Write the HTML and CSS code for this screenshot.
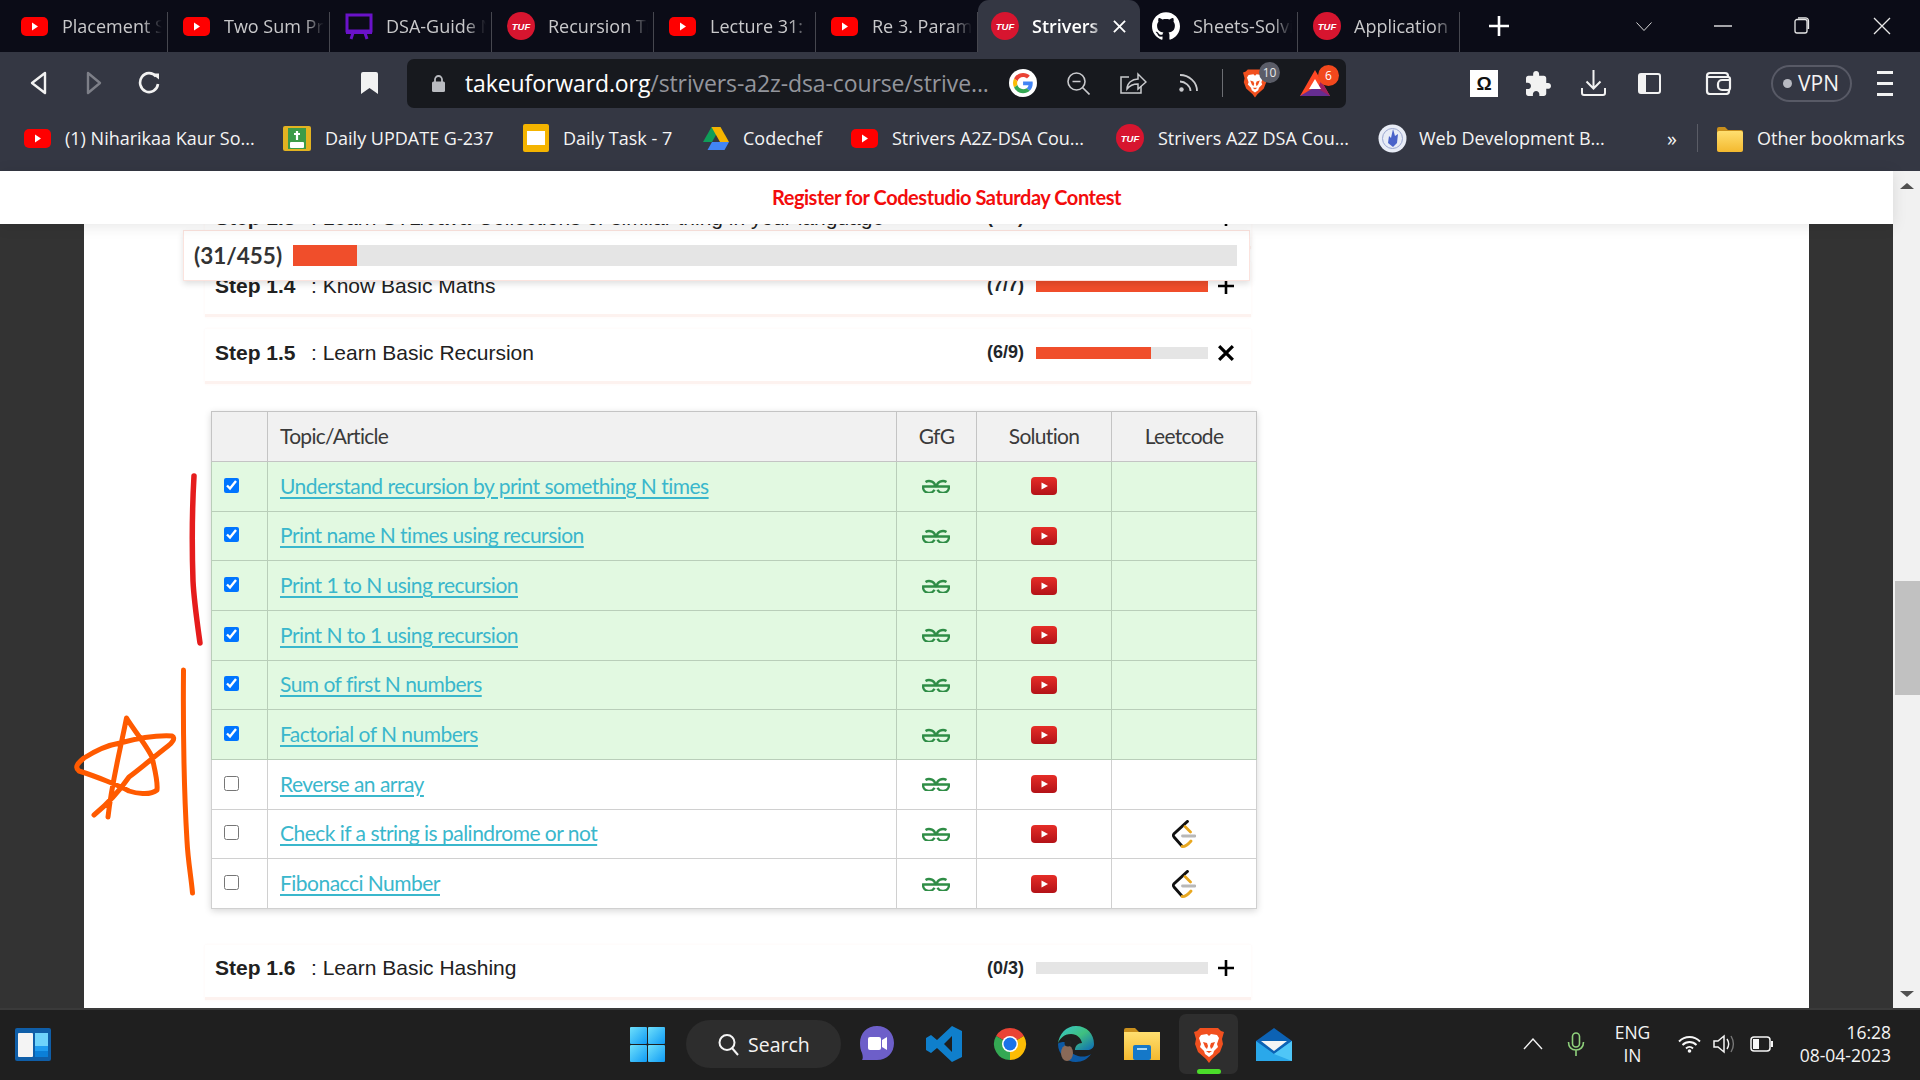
FILE: index.html
```html
<!DOCTYPE html>
<html lang="en">
<head>
<meta charset="utf-8">
<title>Strivers A2Z DSA Course</title>
<link rel="stylesheet" href="styles.css">
</head>
<body>
<svg class="defs" aria-hidden="true">
  <defs>
    <linearGradient id="ytg" x1="0" y1="0" x2="0" y2="1"><stop offset="0" stop-color="#e52d27"/><stop offset="1" stop-color="#b31217"/></linearGradient>
    <linearGradient id="wing" x1="0" y1="0" x2="1" y2="1"><stop offset="0" stop-color="#6fe0fb"/><stop offset="1" stop-color="#0f9bf5"/></linearGradient>
    <linearGradient id="edgeg" x1="0" y1="0" x2="1" y2="1"><stop offset="0" stop-color="#37c6d0"/><stop offset=".5" stop-color="#3fc07f"/><stop offset="1" stop-color="#0c69b8"/></linearGradient>
    <linearGradient id="foldg" x1="0" y1="0" x2="0" y2="1"><stop offset="0" stop-color="#ffdf70"/><stop offset="1" stop-color="#f4b92f"/></linearGradient>
    <symbol id="yt" viewBox="0 0 27 19"><rect width="27" height="19" rx="5" fill="#f00"/><path d="M11 5.500l6 4-6 4z" fill="#fff"/></symbol>
    <symbol id="yt2" viewBox="0 0 26 18"><rect width="26" height="18" rx="4" fill="url(#ytg)"/><path d="M10.500 5.500l6.500 3.500-6.500 3.500z" fill="#fff"/></symbol>
    <symbol id="tuf" viewBox="0 0 28 28"><circle cx="14" cy="14" r="14" fill="#d7152f"/><text x="14" y="17.500" text-anchor="middle" font-family="Liberation Sans" font-size="9.500" font-weight="700" font-style="italic" fill="#fff">TUF</text></symbol>
    <symbol id="gfg" viewBox="0 0 28 14"><g fill="none" stroke="#2f8d46" stroke-width="2.400"><path d="M3.500 3A6 5 0 0 1 13 7.500H1.200A6 5.500 0 0 0 12.500 10.800"/><path d="M24.500 3A6 5 0 0 0 15 7.500H26.800A6 5.500 0 0 1 15.500 10.800"/></g></symbol>
    <symbol id="lc" viewBox="0 0 24 28"><g fill="none" stroke-width="2.800" stroke-linecap="round"><path d="M15.500 1.400L1.800 14Q.8 15.500 2 17L9.500 25.500" stroke="#111"/><path d="M13 6.500L18.500 12M10 26.500Q14 27 19 21" stroke="#e9a820"/><path d="M10.500 16H23" stroke="#b8b8b8"/></g></symbol>
    <symbol id="folder" viewBox="0 0 26 28"><path d="M0 5a2 2 0 0 1 2-2h6l3 3h13a2 2 0 0 1 2 2v17a2 2 0 0 1-2 2H2a2 2 0 0 1-2-2z" fill="#c98f1c"/><rect y="7" width="26" height="21" rx="2" fill="url(#foldg)"/></symbol>
    <symbol id="lion" viewBox="0 0 30 36"><path d="M6 1H24L27 4 30 5 28 12 29 17 26 25 18 32 15 36 12 32 4 25 1 17 2 12 0 5 3 4z" fill="#f1501f"/><path d="M7 8L13 7 15 9 17 7 23 8 25 11 23 17 24 20 20 24 19 27 15 30 11 27 10 24 6 20 7 17 5 11z" fill="#fff"/><path d="M9 15L13 16 14 19 13 22 11 20zM21 15L17 16 16 19 17 22 19 20zM12 24H18L15 26z" fill="#f1501f"/></symbol>
  </defs>
</svg>

<header class="tabs">
  <div class="tab"><svg class="fav-yt"><use href="#yt"/></svg><span class="tab-text">Placement Sheet</span></div>
  <div class="tab"><svg class="fav-yt"><use href="#yt"/></svg><span class="tab-text">Two Sum Problem</span></div>
  <div class="tab"><svg class="fav-tuf" viewBox="0 0 28 26"><g fill="none" stroke="#6a12c9" stroke-width="3"><rect x="2" y="2" width="24" height="16"/><path d="M1 19.500h26M8 20l-2 6M20 20l2 6"/></g></svg><span class="tab-text">DSA-Guide Notes</span></div>
  <div class="tab"><svg class="fav-tuf"><use href="#tuf"/></svg><span class="tab-text">Recursion Tree</span></div>
  <div class="tab"><svg class="fav-yt"><use href="#yt"/></svg><span class="tab-text">Lecture 31: Lists</span></div>
  <div class="tab"><svg class="fav-yt"><use href="#yt"/></svg><span class="tab-text">Re 3. Parameter</span></div>
  <div class="tab tab-active"><svg class="fav-tuf"><use href="#tuf"/></svg><span class="tab-text">Strivers</span><svg class="tab-close" viewBox="0 0 14 14"><path d="M1 1l12 12M13 1L1 13" stroke="#fff" stroke-width="2"/></svg></div>
  <div class="tab tab-short"><svg class="fav-gh" viewBox="0 0 24 24"><path fill="#fff" d="M12 .297c-6.630 0-12 5.373-12 12 0 5.303 3.438 9.800 8.205 11.385.6.113.82-.258.82-.577 0-.285-.01-1.040-.015-2.040-3.338.724-4.042-1.610-4.042-1.610C4.422 18.070 3.633 17.700 3.633 17.700c-1.087-.744.084-.729.084-.729 1.205.084 1.838 1.236 1.838 1.236 1.070 1.835 2.809 1.305 3.495.998.108-.776.417-1.305.76-1.605-2.665-.3-5.466-1.332-5.466-5.930 0-1.310.465-2.380 1.235-3.220-.135-.303-.54-1.523.105-3.176 0 0 1.005-.322 3.300 1.230.96-.267 1.980-.399 3-.405 1.020.006 2.040.138 3 .405 2.280-1.552 3.285-1.230 3.285-1.230.645 1.653.24 2.873.12 3.176.765.84 1.230 1.910 1.230 3.220 0 4.610-2.805 5.625-5.475 5.920.42.36.81 1.096.81 2.220 0 1.606-.015 2.896-.015 3.286 0 .315.21.69.825.57C20.565 22.092 24 17.592 24 12.297c0-6.627-5.373-12-12-12"/></svg><span class="tab-text">Sheets-Solving</span></div>
  <div class="tab"><svg class="fav-tuf"><use href="#tuf"/></svg><span class="tab-text">Application Form</span></div>
  <svg class="tab-plus" viewBox="0 0 20 20"><path d="M10 0v20M0 10h20" stroke="#fff" stroke-width="2.600"/></svg>
  <svg class="win-chev" viewBox="0 0 16 9"><path d="M.5.500L8 8.500 15.500.500" fill="none" stroke="#d8d8d8"/></svg>
  <svg class="win-min" viewBox="0 0 18 2"><path d="M0 1h18" stroke="#e8e8e8" stroke-width="1.400"/></svg>
  <svg class="win-max" viewBox="0 0 18 18"><path d="M3 4.500a2 2 0 0 1 2-2h8a2 2 0 0 1 2 2V14a2 2 0 0 1-2 2H5a2 2 0 0 1-2-2zM6 .8h7.500a3 3 0 0 1 3 3V12" fill="none" stroke="#e8e8e8" stroke-width="1.300"/></svg>
  <svg class="win-close" viewBox="0 0 18 18"><path d="M1 1l16 16M17 1L1 17" stroke="#e8e8e8" stroke-width="1.300"/></svg>
</header>

<nav class="toolbar">
  <svg class="t-back" viewBox="0 0 19 24"><path d="M16 2L3 12l13 10z" fill="none" stroke="#f2f2f2" stroke-width="2.400" stroke-linejoin="round"/></svg>
  <svg class="t-fwd" viewBox="0 0 16 24"><path d="M2 2l12 10L2 22z" fill="none" stroke="#7d7f88" stroke-width="2.400" stroke-linejoin="round"/></svg>
  <svg class="t-reload" viewBox="0 0 22 24"><path d="M18 5.500A9 9.500 0 1 0 20 13" fill="none" stroke="#f2f2f2" stroke-width="2.600"/><path d="M13.500 2.500h7.500v6z" fill="#f2f2f2"/></svg>
  <svg class="t-mark" viewBox="0 0 17 22"><path d="M2 0h13a2 2 0 0 1 2 2v20l-8.500-6L0 22V2a2 2 0 0 1 2-2z" fill="#f2f2f2"/></svg>
  <div class="omnibox">
    <svg class="o-lock" viewBox="0 0 13 17"><rect y="6.500" width="13" height="10.500" rx="1.500" fill="#b9bbc0"/><path d="M3 7V4.500a3.500 3.500 0 0 1 7 0V7" fill="none" stroke="#b9bbc0" stroke-width="1.800"/></svg>
    <div class="url"><span class="url-host">takeuforward.org</span>/strivers-a2z-dsa-course/strive...</div>
    <svg class="o-g" viewBox="0 0 56 56"><circle cx="28" cy="28" r="28" fill="#fff"/><g transform="translate(8 8) scale(.84)"><path fill="#ea4335" d="M24 9.500c3.540 0 6.710 1.220 9.210 3.600l6.850-6.850C35.900 2.380 30.470 0 24 0 14.620 0 6.510 5.380 2.560 13.220l7.980 6.190C12.430 13.720 17.740 9.500 24 9.500z"/><path fill="#4285f4" d="M46.980 24.550c0-1.570-.15-3.090-.38-4.550H24v9.020h12.940c-.58 2.960-2.260 5.480-4.780 7.180l7.730 6c4.510-4.180 7.090-10.360 7.090-17.650z"/><path fill="#fbbc05" d="M10.530 28.590c-.48-1.450-.76-2.990-.76-4.590s.27-3.140.76-4.590l-7.980-6.190C.92 16.460 0 20.120 0 24c0 3.880.92 7.540 2.560 10.780l7.970-6.190z"/><path fill="#34a853" d="M24 48c6.480 0 11.930-2.130 15.890-5.810l-7.730-6c-2.150 1.450-4.920 2.300-8.160 2.300-6.260 0-11.570-4.220-13.470-9.910l-7.980 6.190C6.510 42.620 14.620 48 24 48z"/></g></svg>
    <svg class="o-zoom" viewBox="0 0 23 23"><g fill="none" stroke="#c9cacd" stroke-width="1.600"><circle cx="9.500" cy="9.500" r="8.500"/><path d="M15.500 15.500l7 7M5.500 9.500h8"/></g></svg>
    <svg class="o-share" viewBox="0 0 27 22"><g fill="none" stroke="#c9cacd" stroke-width="1.500"><path d="M9 5H1v16h20v-7"/><path d="M7 17c0-6 5-10 11-10V2l8 8-8 7v-5c-5 0-8 1-11 5z"/></g></svg>
    <svg class="o-rss" viewBox="0 0 19 18"><g fill="none" stroke="#c9cacd" stroke-width="1.800"><path d="M1 1c9 0 17 7 17 16M1 7.500c5 0 10.500 4.500 10.500 9.500"/></g><circle cx="2.500" cy="15.500" r="2.200" fill="#c9cacd"/></svg>
    <span class="o-div"></span>
    <div class="o-ext o-brave">
      <svg class="o-lion"><use href="#lion"/></svg>
      <span class="badge badge-grey">10</span>
    </div>
    <div class="o-ext o-bat">
      <svg class="o-tri" viewBox="0 0 30 26"><path d="M15 0L30 26H0z" fill="#ff4724"/><path d="M15 26L30 26 21 10.500z" fill="#9e1f63"/><path d="M0 26h30L15 17z" fill="#662d91"/><path d="M15 9l6 10H9z" fill="#fff"/></svg>
      <span class="badge badge-orange">6</span>
    </div>
  </div>
  <div class="t-omega">Ω</div>
  <svg class="t-puzzle" viewBox="2 1 21 21"><path fill="#f2f2f2" d="M20.500 11H19V7c0-1.100-.9-2-2-2h-4V3.500C13 2.120 11.880 1 10.500 1S8 2.120 8 3.500V5H4c-1.100 0-1.990.9-1.990 2v3.800H3.500c1.490 0 2.700 1.210 2.700 2.700s-1.210 2.700-2.700 2.700H2V20c0 1.100.9 2 2 2h3.800v-1.500c0-1.490 1.210-2.700 2.700-2.700 1.490 0 2.700 1.210 2.700 2.700V22H17c1.100 0 2-.9 2-2v-4h1.500c1.380 0 2.500-1.120 2.500-2.500S21.880 11 20.500 11z"/></svg>
  <svg class="t-down" viewBox="0 0 25 26"><g fill="none" stroke="#f2f2f2" stroke-width="2"><path d="M12.500 0v18M5.500 11.500l7 7 7-7"/><path d="M1 18v5a2 2 0 0 0 2 2h19a2 2 0 0 0 2-2v-5"/></g></svg>
  <svg class="t-side" viewBox="0 0 23 21"><rect x="1" y="1" width="21" height="19" rx="2" fill="none" stroke="#f2f2f2" stroke-width="2"/><rect x="1" y="1" width="7" height="19" fill="#f2f2f2"/></svg>
  <svg class="t-wallet" viewBox="0 0 27 24"><g fill="none" stroke="#f2f2f2" stroke-width="2.200"><path d="M23 6V5a3 3 0 0 0-3-3H5a3 3 0 0 0-3 3v15a3 3 0 0 0 3 3h16a3 3 0 0 0 3-3v-1"/><path d="M2 6h21a2 2 0 0 1 2 2v9a2 2 0 0 1-2 2h-6a4 4 0 0 1-4-4v-2a4 4 0 0 1 4-4h8"/></g></svg>
  <div class="t-vpn"><span class="vpn-dot"></span>VPN</div>
  <div class="t-menu"><span></span><span></span><span></span></div>
</nav>

<nav class="bookmarks">
  <div class="bm"><svg class="fav-yt"><use href="#yt"/></svg><span>(1) Niharikaa Kaur So...</span></div>
  <div class="bm"><svg class="bm-update" viewBox="0 0 28 25"><rect width="28" height="25" rx="2" fill="#e2b321"/><rect x="5" y="2" width="18" height="21" fill="#3d9b48"/><rect x="7" y="16" width="14" height="6" rx="1" fill="#fff"/><path d="M14 5v9M11 8h6" stroke="#fff" stroke-width="2.200"/></svg><span>Daily UPDATE G-237</span></div>
  <div class="bm"><svg class="bm-slides" viewBox="0 0 26 28"><rect width="26" height="28" rx="2" fill="#f4b400"/><rect x="4" y="7" width="18" height="14" fill="#fff"/></svg><span>Daily Task - 7</span></div>
  <div class="bm"><svg class="bm-drive" viewBox="0 0 26 23"><path d="M8.500 0h9L9 15H0z" fill="#0f9d58"/><path d="M17.500 0L26 15h-9L8.500 0z" fill="#f4b400"/><path d="M4.500 23L9 15h17l-4.500 8z" fill="#4285f4"/></svg><span>Codechef</span></div>
  <div class="bm"><svg class="fav-yt"><use href="#yt"/></svg><span>Strivers A2Z-DSA Cou...</span></div>
  <div class="bm"><svg class="fav-tuf"><use href="#tuf"/></svg><span>Strivers A2Z DSA Cou...</span></div>
  <div class="bm bm-tight"><svg class="bm-web" viewBox="0 0 29 29"><circle cx="14.500" cy="14.500" r="14" fill="#e8ecf6"/><circle cx="14.500" cy="14.500" r="10" fill="none" stroke="#9aa6cf" stroke-width="1"/><path d="M15 5l2 7 3-2-1 9-4 4-5-4 1-7 2 2z" fill="#4a63c9"/></svg><span>Web Development B...</span></div>
  <div class="bm-more">»</div>
  <div class="bm-div"></div>
  <div class="bm"><svg class="bm-folder"><use href="#folder"/></svg><span>Other bookmarks</span></div>
</nav>

<main class="viewport">
  <div class="site">
    <div class="site-head">Register for Codestudio Saturday Contest</div>
    <div class="site-body">
      <div class="column">
        <div class="step-list">
          <section class="step step-first">
            <span class="step-no">Step 1.3</span><span class="step-name">: Learn STL/Java-Collections or similar thing in your language</span>
            <span class="step-count">(9/9)</span><span class="bar"><span class="bar-fill fill-all"></span></span>
            <svg class="step-ico" viewBox="0 0 16 16"><path d="M8 0v16M0 8h16" stroke="#000" stroke-width="2.600"/></svg>
          </section>
          <section class="step">
            <span class="step-no">Step 1.4</span><span class="step-name">: Know Basic Maths</span>
            <span class="step-count">(7/7)</span><span class="bar"><span class="bar-fill fill-all"></span></span>
            <svg class="step-ico" viewBox="0 0 16 16"><path d="M8 0v16M0 8h16" stroke="#000" stroke-width="2.600"/></svg>
          </section>
          <section class="step">
            <span class="step-no">Step 1.5</span><span class="step-name">: Learn Basic Recursion</span>
            <span class="step-count">(6/9)</span><span class="bar"><span class="bar-fill fill-two"></span></span>
            <svg class="step-ico" viewBox="0 0 14 14"><path d="M1 1l12 12M13 1L1 13" stroke="#000" stroke-width="2.800"/></svg>
          </section>
        </div>
        <table class="topics">
          <colgroup><col class="c-check"><col class="c-topic"><col class="c-gfg"><col class="c-sol"><col class="c-lc"></colgroup>
          <thead><tr><th></th><th class="th-left">Topic/Article</th><th>GfG</th><th>Solution</th><th>Leetcode</th></tr></thead>
          <tbody>
            <tr class="done"><td class="cb"><input type="checkbox" checked></td><td><a href="#">Understand recursion by print something N times</a></td><td class="cc"><svg class="i-gfg"><use href="#gfg"/></svg></td><td class="cc"><svg class="i-yt"><use href="#yt2"/></svg></td><td></td></tr>
            <tr class="done"><td class="cb"><input type="checkbox" checked></td><td><a href="#">Print name N times using recursion</a></td><td class="cc"><svg class="i-gfg"><use href="#gfg"/></svg></td><td class="cc"><svg class="i-yt"><use href="#yt2"/></svg></td><td></td></tr>
            <tr class="done"><td class="cb"><input type="checkbox" checked></td><td><a href="#">Print 1 to N using recursion</a></td><td class="cc"><svg class="i-gfg"><use href="#gfg"/></svg></td><td class="cc"><svg class="i-yt"><use href="#yt2"/></svg></td><td></td></tr>
            <tr class="done"><td class="cb"><input type="checkbox" checked></td><td><a href="#">Print N to 1 using recursion</a></td><td class="cc"><svg class="i-gfg"><use href="#gfg"/></svg></td><td class="cc"><svg class="i-yt"><use href="#yt2"/></svg></td><td></td></tr>
            <tr class="done"><td class="cb"><input type="checkbox" checked></td><td><a href="#">Sum of first N numbers</a></td><td class="cc"><svg class="i-gfg"><use href="#gfg"/></svg></td><td class="cc"><svg class="i-yt"><use href="#yt2"/></svg></td><td></td></tr>
            <tr class="done"><td class="cb"><input type="checkbox" checked></td><td><a href="#">Factorial of N numbers</a></td><td class="cc"><svg class="i-gfg"><use href="#gfg"/></svg></td><td class="cc"><svg class="i-yt"><use href="#yt2"/></svg></td><td></td></tr>
            <tr><td class="cb"><input type="checkbox"></td><td><a href="#">Reverse an array</a></td><td class="cc"><svg class="i-gfg"><use href="#gfg"/></svg></td><td class="cc"><svg class="i-yt"><use href="#yt2"/></svg></td><td></td></tr>
            <tr><td class="cb"><input type="checkbox"></td><td><a href="#">Check if a string is palindrome or not</a></td><td class="cc"><svg class="i-gfg"><use href="#gfg"/></svg></td><td class="cc"><svg class="i-yt"><use href="#yt2"/></svg></td><td class="cc"><svg class="i-lc"><use href="#lc"/></svg></td></tr>
            <tr><td class="cb"><input type="checkbox"></td><td><a href="#">Fibonacci Number</a></td><td class="cc"><svg class="i-gfg"><use href="#gfg"/></svg></td><td class="cc"><svg class="i-yt"><use href="#yt2"/></svg></td><td class="cc"><svg class="i-lc"><use href="#lc"/></svg></td></tr>
          </tbody>
        </table>
        <section class="step step-last">
          <span class="step-no">Step 1.6</span><span class="step-name">: Learn Basic Hashing</span>
          <span class="step-count">(0/3)</span><span class="bar"></span>
          <svg class="step-ico" viewBox="0 0 16 16"><path d="M8 0v16M0 8h16" stroke="#000" stroke-width="2.600"/></svg>
        </section>
        <section class="step step-next"></section>
      </div>
      <div class="sticky-progress">
        <span class="sticky-count">(31/455)</span>
        <span class="sticky-bar"><span class="sticky-fill"></span></span>
      </div>
    </div>
  </div>
  <div class="scrollbar">
    <span class="sb-up"></span>
    <span class="sb-thumb"></span>
    <span class="sb-down"></span>
  </div>
  <svg class="ink" viewBox="0 0 300 837">
    <path class="ink-red" d="M194 305C192 340 192 380 193 410 194 430 197 450 200 472"/>
    <path class="ink-orange" d="M183.500 499C183 560 184 620 187 670 188 690 191 705 192.500 722"/>
    <path class="ink-orange" d="M108 646C112 610 120 580 126.500 547 131 555 147 575 152 586 155 600 158 610 157 619 150 625 135 622 129 620 120 615 95 605 79 600 74 596 78 592 84 587 95 580 108 574 120 572 135 568 155 564 172 565 176 567 172 572 168 575 155 585 140 598 129 606 118 622 105 635 94 644"/>
  </svg>
</main>

<footer class="taskbar">
  <svg class="k-widgets" viewBox="0 0 36 33"><rect width="36" height="33" rx="2" fill="#0f5ea8"/><rect x="3" y="5" width="15" height="24" rx="1" fill="#f4f4f4"/><rect x="20" y="5" width="13" height="13" fill="#6fd3fb"/><rect x="20" y="18" width="13" height="5" fill="#1f9cf0"/><rect x="20" y="23" width="13" height="6" fill="#0b7fd8"/></svg>
  <svg class="k-win" viewBox="0 0 35 35"><g fill="url(#wing)"><rect width="17" height="17" rx="1"/><rect x="18" width="17" height="17" rx="1"/><rect y="18" width="17" height="17" rx="1"/><rect x="18" y="18" width="17" height="17" rx="1"/></g></svg>
  <div class="k-search">
    <svg class="k-mag" viewBox="0 0 21 23"><circle cx="9" cy="9.500" r="7.500" fill="none" stroke="#f4f4f4" stroke-width="2"/><path d="M14 15l6 7" stroke="#f4f4f4" stroke-width="2"/></svg>
    <span>Search</span>
  </div>
  <svg class="k-teams" viewBox="0 0 34 36"><path d="M17 0c10 0 17 7 17 17s-7 17-17 17H2c1-1 1-4 0-7C.6 24 0 21 0 17 0 7 7 0 17 0z" fill="#6d5fc9"/><rect x="8" y="11" width="13" height="13" rx="2" fill="#fff"/><path d="M22 14l5-3v13l-5-3z" fill="#fff"/></svg>
  <svg class="k-code" viewBox="0 0 36 36"><path d="M26 0l10 5v26l-10 5L11 22l-6 5-5-3V12l5-3 6 5zM26 10l-8 8 8 8z" fill="#0f7fcc" fill-rule="evenodd"/></svg>
  <svg class="k-chrome" viewBox="0 0 36 36"><path d="M4.140 10A16 16 0 0 1 31.860 10L18 18z" fill="#ea4335"/><path d="M31.860 10A16 16 0 0 1 18 34L18 18z" fill="#fbbc05"/><path d="M18 34A16 16 0 0 1 4.140 10L18 18z" fill="#34a853"/><circle cx="18" cy="18" r="8" fill="#fff"/><circle cx="18" cy="18" r="6.500" fill="#1a73e8"/></svg>
  <svg class="k-edge" viewBox="0 0 36 36"><path d="M18 0c11 0 18 8 18 18 0 4-3 6-7 6H17c0-4 3-7 7-7-1-5-5-9-11-9C6 8 1 13 0 18 1 8 8 0 18 0z" fill="url(#edgeg)"/><path d="M0 18c0 10 8 18 18 18 6 0 12-3 15-8-4 3-9 3-13 2-7-2-11-7-11-14C5 16 1 16 0 18z" fill="#0c59a4"/><ellipse cx="9" cy="27" rx="6" ry="8" fill="#8a6a58"/><circle cx="10" cy="17" r="3.500" fill="#222"/></svg>
  <svg class="k-files" viewBox="0 0 36 32"><path d="M0 2a2 2 0 0 1 2-2h9l4 4H0z" fill="#c98f1c"/><rect y="4" width="36" height="28" fill="url(#foldg)"/><rect x="9" y="17" width="18" height="15" rx="2" fill="#1578c8"/><rect x="13" y="20" width="10" height="2" fill="#a9d8f5"/></svg>
  <div class="k-active">
    <svg class="k-lion"><use href="#lion"/></svg>
    <span class="k-dot"></span>
  </div>
  <svg class="k-mail" viewBox="0 0 36 33"><path d="M18 0l18 13v20H0V13z" fill="#0c62b4"/><path d="M5 13h26L18 23z" fill="#f4f4f4"/><path d="M0 13l18 13 18-13v20H0z" fill="#2aa8ea"/><path d="M18 26l18-13v20z" fill="#4fc6f7"/></svg>
  <svg class="k-up" viewBox="0 0 20 12"><path d="M1 11l9-10 9 10" fill="none" stroke="#f2f2f2" stroke-width="1.400"/></svg>
  <svg class="k-mic" viewBox="0 0 18 24"><g fill="none" stroke="#8fd17c" stroke-width="1.600"><rect x="5.500" y="1" width="7" height="14" rx="3.500"/><path d="M1.500 10c0 5 3 8 7.500 8s7.500-3 7.500-8M9 18v6"/></g></svg>
  <div class="k-lang"><span>ENG</span><span>IN</span></div>
  <svg class="k-wifi" viewBox="0 0 23 18"><g fill="none" stroke="#f6f6f6" stroke-width="1.900"><path d="M1 6.500c6-6 15-6 21 0M4.500 10c4-4 10-4 14 0M8 13.500c2-2 5-2 7 0"/></g><circle cx="11.500" cy="16" r="1.800" fill="#f6f6f6"/></svg>
  <svg class="k-vol" viewBox="0 0 24 20"><path d="M1 7h4l6-5v16l-6-5H1z" fill="none" stroke="#f6f6f6" stroke-width="1.500"/><path d="M14 5c2 3 2 7 0 10" fill="none" stroke="#f6f6f6" stroke-width="1.400"/><path d="M18 2c3 5 3 11 0 16" fill="none" stroke="#777" stroke-width="1.400"/></svg>
  <svg class="k-batt" viewBox="0 0 23 16"><rect x="1" y="1" width="19" height="14" rx="3" fill="none" stroke="#f6f6f6" stroke-width="1.500"/><rect x="3" y="3" width="6" height="10" fill="#f6f6f6"/><rect x="21" y="5" width="2" height="6" fill="#f6f6f6"/></svg>
  <div class="k-clock"><span>16:28</span><span>08-04-2023</span></div>
</footer>
</body>
</html>
```

FILE: styles.css
```css
* { box-sizing: border-box; }
html, body { margin: 0; padding: 0; }
body {
  width: 1920px;
  height: 1080px;
  overflow: hidden;
  display: flex;
  flex-direction: column;
  font-family: "Open Sans", "Noto Sans", sans-serif;
  background: #343743;
}
.defs { position: absolute; width: 0; height: 0; }
svg { display: block; flex: none; }

/* Tab strip */
.tabs { height: 52px; background: #0b0c17; display: flex; align-items: center; padding-left: 6px; flex: none; }
.tab {
  width: 162px; height: 52px; flex: none; display: flex; align-items: center;
  padding: 0 6px 0 15px; color: #c9c9cb; font-size: 18px; position: relative;
}
.tab::after { content: ""; position: absolute; right: 0; top: 12px; height: 40px; width: 1px; background: #46474f; }
.tab-text { white-space: nowrap; overflow: hidden; flex: 1; min-width: 0; -webkit-mask-image: linear-gradient(90deg, #000 80%, transparent 100%); mask-image: linear-gradient(90deg, #000 80%, transparent 100%); }
.tab .fav-gh, .tab .fav-tuf { margin-right: 13px; }
.tab .fav-yt { margin-right: 14px; }
.fav-yt { width: 27px; height: 19px; }
.fav-tuf { width: 28px; height: 28px; }
.fav-gh { width: 28px; height: 28px; }
.tab-active { background: #343743; border-radius: 11px 11px 0 0; color: #fff; font-weight: 600; padding-left: 13px; }
.tab-active::after { display: none; }
.tab-close { width: 13px; height: 13px; margin: 0 8px 0 8px; }
.tab-short { padding-left: 12px; width: 158px; }
.tab-plus { width: 20px; height: 20px; margin-left: 29px; }
.win-chev { width: 16px; height: 9px; margin: 0 0 0 127px; }
.win-min { width: 18px; height: 2px; margin-left: 62px; }
.win-max { width: 18px; height: 18px; margin-left: 60px; }
.win-close { width: 18px; height: 18px; margin-left: 63px; }

/* Toolbar */
.toolbar { height: 62px; display: flex; align-items: center; flex: none; background: #343743; }
.t-back { width: 19px; height: 24px; margin-left: 29px; }
.t-fwd { width: 16px; height: 24px; margin-left: 38px; }
.t-reload { width: 22px; height: 24px; margin-left: 36px; }
.t-mark { width: 17px; height: 22px; margin-left: 201px; }
.omnibox { width: 939px; height: 49px; margin-left: 29px; background: #17191e; border-radius: 7px; display: flex; align-items: center; padding-left: 25px; }
.o-lock { width: 13px; height: 17px; }
.url { width: 524px; margin-left: 20px; white-space: nowrap; overflow: hidden; color: #93959c; font-size: 23px; letter-spacing: -.1px; }
.url-host { color: #fff; }
.o-g { width: 28px; height: 28px; margin-left: 20px; }
.o-zoom { width: 23px; height: 23px; margin-left: 30px; }
.o-share { width: 27px; height: 22px; margin-left: 30px; }
.o-rss { width: 19px; height: 18px; margin-left: 32px; }
.o-div { width: 1px; height: 28px; margin-left: 24px; background: #6c6e73; }
.o-ext { position: relative; }
.o-brave { width: 24px; height: 32px; margin-left: 20px; }
.o-lion { width: 24px; height: 32px; }
.o-bat { width: 30px; height: 26px; margin-left: 33px; }
.o-tri { width: 30px; height: 26px; }
.badge { position: absolute; width: 21px; height: 21px; border-radius: 50%; color: #fff; font-size: 12px; display: flex; align-items: center; justify-content: center; }
.badge-grey { background: #5b5d68; left: 16px; top: -5px; color: #e8e8e8; }
.badge-orange { background: #f2481d; left: 18px; top: -5px; }
.t-omega { width: 28px; height: 27px; margin-left: 124px; background: #fff; color: #111; font: 700 19px/27px "Liberation Sans", sans-serif; text-align: center; }
.t-puzzle { width: 27px; height: 25px; margin-left: 27px; }
.t-down { width: 25px; height: 26px; margin-left: 29px; }
.t-side { width: 23px; height: 21px; margin-left: 32px; }
.t-wallet { width: 27px; height: 24px; margin-left: 44px; }
.t-vpn { width: 81px; height: 37px; margin-left: 39px; border: 2px solid #585a66; border-radius: 19px; display: flex; align-items: center; color: #f4f4f4; font-size: 21px; padding-left: 10px; gap: 6px; }
.vpn-dot { width: 9px; height: 9px; border-radius: 50%; background: #b8bac2; }
.t-menu { width: 16px; margin-left: 25px; display: flex; flex-direction: column; gap: 8px; }
.t-menu span { height: 3px; background: #f2f2f2; }

/* Bookmarks */
.bookmarks { height: 57px; display: grid; grid-template-columns: 24px 259px 240px 180px 148px 265px 262px 289px 30px 20px auto; align-items: center; flex: none; color: #f4f4f4; font-size: 18px; padding-bottom: 9px; background: #343743; }
.bookmarks::before { content: ""; }
.bm { display: flex; align-items: center; gap: 14px; white-space: nowrap; }
.bm-tight { gap: 12px; }
.bm-update { width: 28px; height: 25px; }
.bm-slides { width: 26px; height: 28px; }
.bm-drive { width: 26px; height: 23px; }
.bm-web { width: 29px; height: 29px; }
.bm-folder { width: 26px; height: 28px; }
.bm-more { font-size: 20px; }
.bm-div { width: 1px; height: 28px; background: #5a5c66; justify-self: start; }

/* Page viewport */
.viewport { flex: 1; min-height: 0; display: flex; position: relative; }
.site { flex: 1; min-width: 0; display: flex; flex-direction: column; }
.site-head {
  height: 53px; flex: none; background: #fff; color: #f30c0c; z-index: 3; position: relative;
  display: flex; align-items: center; justify-content: center; padding-bottom: 1px;
  font-family: Lato, sans-serif; font-weight: 700; font-size: 20px; letter-spacing: -.45px;
  box-shadow: 0 2px 14px rgba(0, 0, 0, .1);
}
.site-body { flex: 1; min-height: 0; background: #333; position: relative; overflow: hidden; padding: 0 84px; }
.column { height: 100%; background: #fff; padding-left: 121px; display: flow-root; }
.step-list { margin-top: -30px; display: flex; flex-direction: column; gap: 12px; }
.step {
  width: 1046px; height: 55px; background: #fff; display: flex; align-items: center;
  padding: 0 17px 5px 10px; border-bottom: 3px solid #fdf2ef; box-shadow: 0 0 3px rgba(240, 78, 43, .05);
  font-family: "Liberation Sans", Arial, sans-serif; color: #212121;
}
.step-first { margin-bottom: 1px; }
.step-no { font-weight: 700; font-size: 21px; width: 96px; }
.step-name { font-size: 21px; flex: 1; white-space: nowrap; }
.step-count { font-weight: 700; font-size: 18px; width: 49px; color: #212529; }
.bar { width: 172px; height: 12px; background: #e5e5e5; display: block; }
.bar-fill { display: block; height: 100%; background: #f04e2b; }
.fill-all { width: 100%; }
.fill-two { width: 66.700%; }
.step-ico { width: 16px; height: 16px; margin-left: 10px; }
.step-last { margin-top: 36px; }
.step-next { margin-top: 8px; height: 10px; border-bottom: 0; border-top: 1px solid #fbe6e2; padding: 0; margin-left: -22px; width: 1068px; box-shadow: none; }

/* Topic table */
.topics {
  width: 1045px; margin: 27px 0 0 6px; border-collapse: collapse; table-layout: fixed;
  font-family: Lato, sans-serif; font-size: 21px; color: #3a3a3a; box-shadow: 0 2px 7px rgba(0, 0, 0, .16);
}
.c-check { width: 56px; }
.c-topic { width: 629px; }
.c-gfg { width: 80px; }
.c-sol { width: 135px; }
.c-lc { width: 145px; }
.topics th { height: 50px; background: #f1f1f1; font-weight: 400; border: 1px solid #c4c4c4; padding: 0 0 3px; letter-spacing: -.7px; }
.topics th.th-left { text-align: left; padding-left: 12px; }
.topics td { height: 49.670px; border: 1px solid #d0d0d0; padding: 0 0 2px 12px; }
.topics td.cc { padding: 0; }
.topics td.cb { padding: 0 0 2px 12px; }
.topics .done td { background: #e2f9e1; border-color: #b9ceb9; }
.topics td input { display: block; width: 15px; height: 15px; margin: 0; }
.topics a { color: #3ab7cc; letter-spacing: -.52px; text-decoration-thickness: 2px; text-underline-offset: 3px; white-space: nowrap; }
.i-gfg { width: 28px; height: 14px; margin: 0 0 0 25px; }
.i-yt { width: 26px; height: 18px; margin: 0 auto; }
.i-lc { width: 24px; height: 28px; margin: 1px auto 0; }

/* Sticky progress */
.sticky-progress {
  position: absolute; left: 183px; top: 6px; width: 1067px; height: 51px; background: #fff; z-index: 2;
  border: 1px solid #fbe3de; box-shadow: 0 3px 6px rgba(0, 0, 0, .12);
  display: flex; align-items: center; padding: 0 12px 0 10px; font-family: Lato, sans-serif;
}
.sticky-count { width: 99px; font-weight: 700; font-size: 22.500px; color: #333; white-space: nowrap; }
.sticky-bar { width: 944px; height: 21px; background: #e5e5e5; display: block; }
.sticky-fill { display: block; width: 64px; height: 100%; background: #f04e2b; }

/* Scrollbar */
.scrollbar { width: 27px; flex: none; background: #f1f1f1; position: relative; padding-left: 2px; display: flex; flex-direction: column; align-items: stretch; }
.sb-up, .sb-down { width: 0; height: 0; border-left: 7px solid transparent; border-right: 7px solid transparent; position: absolute; left: 7px; }
.sb-up { border-bottom: 6px solid #505050; top: 12px; }
.sb-down { border-top: 6px solid #505050; bottom: 11px; }
.sb-thumb { display: block; height: 114px; margin-top: 410px; background: #c1c1c1; }

/* Pen annotations, drawn over the page */
.ink { position: absolute; left: 0; top: 0; width: 300px; height: 837px; z-index: 4; pointer-events: none; }
.ink path { fill: none; stroke-linecap: round; stroke-linejoin: round; }
.ink-red { stroke: #e51c1c; stroke-width: 5.500; }
.ink-orange { stroke: #ff5a00; stroke-width: 5; }

/* Taskbar */
.taskbar { height: 72px; flex: none; background: #1f1f1f; border-top: 2px solid #3a3a3a; display: flex; align-items: center; color: #f4f4f4; padding-bottom: 2px; }
.k-widgets { width: 36px; height: 33px; margin-left: 15px; }
.k-win { width: 35px; height: 35px; margin-left: 579px; }
.k-search { width: 155px; height: 48px; margin-left: 21px; background: #2d2d2d; border-radius: 24px; display: flex; align-items: center; padding-left: 32px; gap: 9px; font-size: 19.500px; }
.k-mag { width: 21px; height: 23px; }
.k-teams { width: 34px; height: 36px; margin-left: 19px; }
.k-code { width: 36px; height: 36px; margin-left: 32px; }
.k-chrome { width: 36px; height: 36px; margin-left: 30px; }
.k-edge { width: 36px; height: 36px; margin-left: 30px; }
.k-files { width: 36px; height: 32px; margin-left: 30px; }
.k-active { width: 59px; height: 60px; margin-left: 19px; background: #2e2e2e; border-radius: 7px; display: flex; flex-direction: column; align-items: center; padding-top: 13px; gap: 6px; }
.k-lion { width: 30px; height: 36px; }
.k-dot { width: 24px; height: 5px; border-radius: 3px; background: #4bdc2a; }
.k-mail { width: 36px; height: 33px; margin-left: 18px; }
.k-up { width: 20px; height: 12px; margin-left: 231px; }
.k-mic { width: 18px; height: 24px; margin-left: 24px; }
.k-lang { width: 35px; margin-left: 30px; display: flex; flex-direction: column; align-items: center; font-size: 17.500px; line-height: 23px; }
.k-wifi { width: 23px; height: 18px; margin-left: 28px; }
.k-vol { width: 24px; height: 20px; margin-left: 12px; }
.k-batt { width: 23px; height: 16px; margin-left: 13px; }
.k-clock { margin-left: auto; margin-right: 29px; display: flex; flex-direction: column; align-items: flex-end; font-size: 17.500px; line-height: 23px; }
```
